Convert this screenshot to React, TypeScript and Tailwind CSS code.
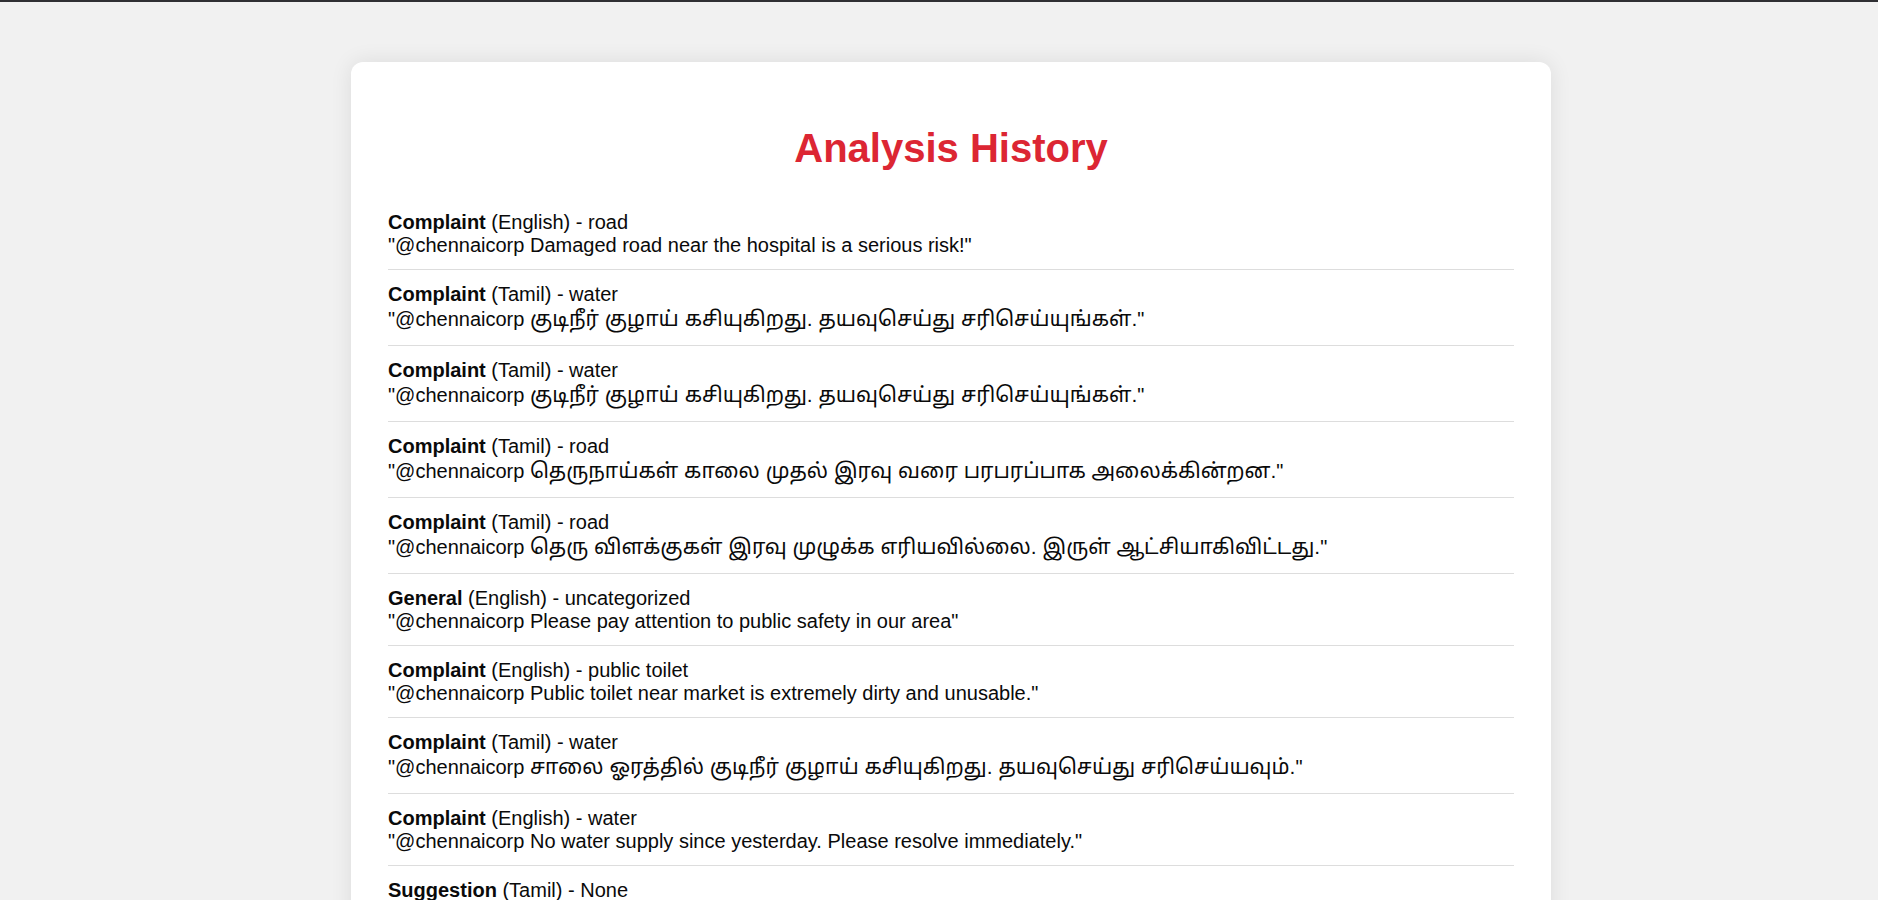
const entries = [
  { kind: "Complaint", lang: "English", cat: "road", text: "Damaged road near the hospital is a serious risk!" },
  { kind: "Complaint", lang: "Tamil", cat: "water", text: "குடிநீர் குழாய் கசியுகிறது. தயவுசெய்து சரிசெய்யுங்கள்." },
  { kind: "Complaint", lang: "Tamil", cat: "water", text: "குடிநீர் குழாய் கசியுகிறது. தயவுசெய்து சரிசெய்யுங்கள்." },
  { kind: "Complaint", lang: "Tamil", cat: "road", text: "தெருநாய்கள் காலை முதல் இரவு வரை பரபரப்பாக அலைக்கின்றன." },
  { kind: "Complaint", lang: "Tamil", cat: "road", text: "தெரு விளக்குகள் இரவு முழுக்க எரியவில்லை. இருள் ஆட்சியாகிவிட்டது." },
  { kind: "General", lang: "English", cat: "uncategorized", text: "Please pay attention to public safety in our area" },
  { kind: "Complaint", lang: "English", cat: "public toilet", text: "Public toilet near market is extremely dirty and unusable." },
  { kind: "Complaint", lang: "Tamil", cat: "water", text: "சாலை ஓரத்தில் குடிநீர் குழாய் கசியுகிறது. தயவுசெய்து சரிசெய்யவும்." },
  { kind: "Complaint", lang: "English", cat: "water", text: "No water supply since yesterday. Please resolve immediately." },
  { kind: "Suggestion", lang: "Tamil", cat: "None", text: "பூங்காவில் கூடுதல் விளக்குகள் அமைக்கலாம்." },
  { kind: "Complaint", lang: "English", cat: "garbage", text: "Garbage has not been collected for three days." },
];

export default function App() {
  return (
    <div className="min-h-screen bg-[#f1f1f1] font-['Liberation_Sans',Arial,'Noto_Sans_Tamil','Noto_Sans',sans-serif] text-[#0a0a0a]">
      <div className="h-[2px] bg-[#2f2f33]" />
      <div className="flex justify-center pl-6 pt-[60px] pb-10">
        <div className="w-[1200px] rounded-xl bg-white px-[37px] pt-[63px] pb-8 shadow-[0_0_22px_rgba(0,0,0,0.09)]">
          <h2 className="text-center text-[40px] leading-[46px] font-bold text-[#dc2633]">Analysis History</h2>
          <ul className="mt-[27px]">
            {entries.map((e, i) => (
              <li key={i} className="border-b border-[#dddddd] py-[12.5px] text-[20px] leading-[23px]">
                <div>
                  <strong className="font-bold">{e.kind}</strong> ({e.lang}) - {e.cat}
                </div>
                {e.lang === "Tamil" ? (
                  <div className="leading-[27px]">
                    "@chennaicorp <span className="text-[21px] leading-[20px]">{e.text}</span>"
                  </div>
                ) : (
                  <div>"@chennaicorp {e.text}"</div>
                )}
              </li>
            ))}
          </ul>
        </div>
      </div>
    </div>
  );
}
